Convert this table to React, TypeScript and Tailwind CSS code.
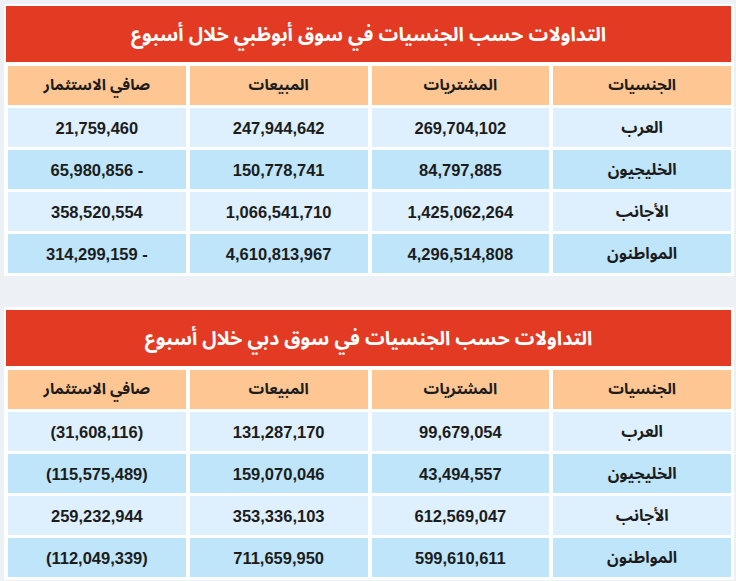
import React from "react";

type Row = { name: string; buy: string; sell: string; net: string };

const abuDhabi: Row[] = [
  { name: "العرب", buy: "269,704,102", sell: "247,944,642", net: "21,759,460" },
  { name: "الخليجيون", buy: "84,797,885", sell: "150,778,741", net: "65,980,856 -" },
  { name: "الأجانب", buy: "1,425,062,264", sell: "1,066,541,710", net: "358,520,554" },
  { name: "المواطنون", buy: "4,296,514,808", sell: "4,610,813,967", net: "314,299,159 -" },
];

const dubai: Row[] = [
  { name: "العرب", buy: "99,679,054", sell: "131,287,170", net: "(31,608,116)" },
  { name: "الخليجيون", buy: "43,494,557", sell: "159,070,046", net: "(115,575,489)" },
  { name: "الأجانب", buy: "612,569,047", sell: "353,336,103", net: "259,232,944" },
  { name: "المواطنون", buy: "599,610,611", sell: "711,659,950", net: "(112,049,339)" },
];

const arabicFont = { fontFamily: '"Noto Sans Arabic", "DejaVu Sans", sans-serif' };
const numFont = { fontFamily: '"Liberation Sans", Arial, sans-serif' };

function Table({ title, rows, topPad }: { title: string; rows: Row[]; topPad: string }) {
  const headers = ["الجنسيات", "المشتريات", "المبيعات", "صافي الاستثمار"];
  return (
    <div className={`ml-[4px] w-[730px] bg-white ${topPad} pb-[3px]`}>
      <div
        className="ml-[2px] mr-[3px] h-[56px] bg-[#e33a23] flex items-center justify-center pt-[2px] text-white font-bold text-[19.5px]"
        dir="rtl"
        style={arabicFont}
      >
        {title}
      </div>
      <div dir="rtl" className="mt-[4px] ml-[4px] mr-[3px] grid grid-cols-4 gap-x-[4px] gap-y-[3px]">
        {headers.map((h) => (
          <div
            key={h}
            className="h-[39px] bg-[#fdc692] flex items-center justify-center font-bold text-[15.5px] text-[#1c1c1c]"
            style={arabicFont}
          >
            {h}
          </div>
        ))}
        {rows.map((r, i) => {
          const bg = i % 2 === 0 ? "bg-[#def0fd]" : "bg-[#bee5fa]";
          return (
            <React.Fragment key={r.name}>
              <div
                className={`h-[39px] ${bg} flex items-center justify-center font-bold text-[16px] text-[#1c1c1c]`}
                style={arabicFont}
              >
                {r.name}
              </div>
              {[r.buy, r.sell, r.net].map((v, j) => (
                <div
                  key={j}
                  className={`h-[39px] ${bg} flex items-center justify-center pt-[2px] font-bold text-[16.5px] text-[#1c1c1c]`}
                  style={numFont}
                >
                  <span dir="ltr">{v}</span>
                </div>
              ))}
            </React.Fragment>
          );
        })}
      </div>
    </div>
  );
}

export default function App() {
  return (
    <div className="w-[736px] h-[581px] bg-[#edf1f5] pt-[4px] overflow-hidden">
      <Table title="التداولات حسب الجنسيات في سوق أبوظبي خلال أسبوع" rows={abuDhabi} topPad="pt-[2px]" />
      <div className="h-[31px]" />
      <Table title="التداولات حسب الجنسيات في سوق دبي خلال أسبوع" rows={dubai} topPad="pt-[3px]" />
    </div>
  );
}
